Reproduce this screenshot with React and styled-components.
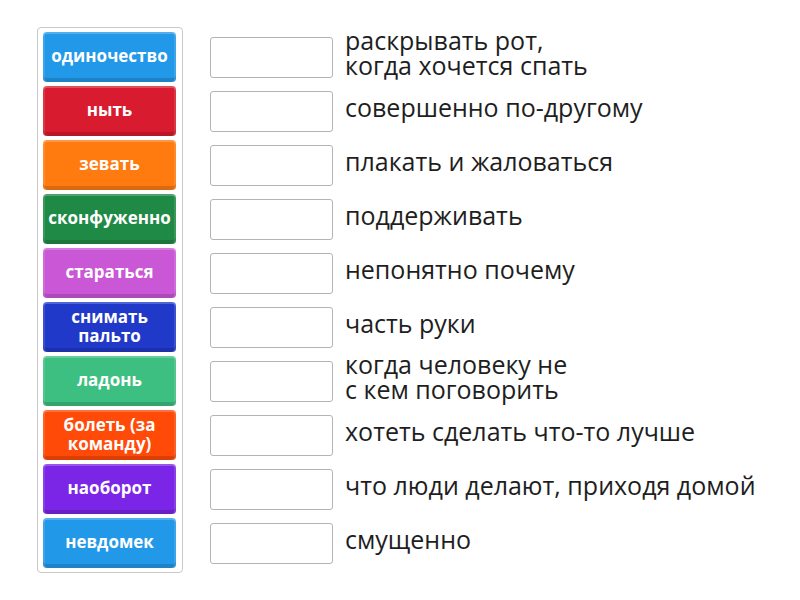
import styled, { createGlobalStyle } from 'styled-components'

const GlobalStyle = createGlobalStyle`
  body {
    margin: 0;
    background: #ffffff;
    font-family: 'Open Sans', 'Noto Sans', sans-serif;
  }
`

const tiles = [
  { label: 'одиночество', color: '#2298e8' },
  { label: 'ныть', color: '#d81b2e' },
  { label: 'зевать', color: '#ff7b10' },
  { label: 'сконфуженно', color: '#1f8a45' },
  { label: 'стараться', color: '#c957d6' },
  { label: 'снимать пальто', color: '#2139c9' },
  { label: 'ладонь', color: '#3dbf81' },
  { label: 'болеть (за команду)', color: '#ff4a08' },
  { label: 'наоборот', color: '#7b25e6' },
  { label: 'невдомек', color: '#2298e8' },
]

const definitions = [
  ['раскрывать рот,', 'когда хочется спать'],
  ['совершенно по-другому'],
  ['плакать и жаловаться'],
  ['поддерживать'],
  ['непонятно почему'],
  ['часть руки'],
  ['когда человеку не', 'с кем поговорить'],
  ['хотеть сделать что-то лучше'],
  ['что люди делают, приходя домой'],
  ['смущенно'],
]

const App = () => {
  return (
    <>
      <GlobalStyle />
      <Page>
        <TileCard>
          {tiles.map((t) => (
            <Tile key={t.label} $color={t.color}>
              {t.label}
            </Tile>
          ))}
        </TileCard>
        <Targets>
          {definitions.map((lines, i) => (
            <Row key={i}>
              <DropBox />
              <Definition>
                {lines.map((l, j) => (
                  <span key={j}>{l}</span>
                ))}
              </Definition>
            </Row>
          ))}
        </Targets>
      </Page>
    </>
  )
}

export default App

const Page = styled.div`
  display: flex;
  align-items: flex-start;
  padding: 27px 0 0 37px;
`

const TileCard = styled.div`
  display: flex;
  flex-direction: column;
  gap: 4px;
  padding: 4px 6px 4px 5px;
  border: 1px solid #c8c8c8;
  border-radius: 4px;
  background: #ffffff;
`

const Tile = styled.div`
  width: 133px;
  height: 50px;
  box-sizing: border-box;
  display: flex;
  align-items: center;
  justify-content: center;
  text-align: center;
  padding: 0 3px 3px;
  border-radius: 4px;
  background: ${(p) => p.$color};
  box-shadow:
    inset 0 2px 0 rgba(255, 255, 255, 0.22),
    inset 2px 0 0 rgba(255, 255, 255, 0.12),
    inset -2px 0 0 rgba(255, 255, 255, 0.12),
    inset 0 -4px 0 rgba(0, 0, 0, 0.14);
  color: #ffffff;
  font-size: 17px;
  font-weight: 700;
  line-height: 19px;
`

const Targets = styled.div`
  display: flex;
  flex-direction: column;
  gap: 4px;
  margin-left: 27px;
  padding-top: 5px;
`

const Row = styled.div`
  height: 50px;
  display: flex;
  align-items: center;
  gap: 12px;
`

const DropBox = styled.div`
  width: 123px;
  height: 41px;
  box-sizing: border-box;
  border: 1px solid #b4b4b4;
  border-radius: 3px;
  background: #ffffff;
  flex-shrink: 0;
`

const Definition = styled.div`
  display: flex;
  flex-direction: column;
  margin-bottom: 8px;
  color: #1e1e1e;
  font-size: 25px;
  line-height: 25px;
  white-space: nowrap;
`
